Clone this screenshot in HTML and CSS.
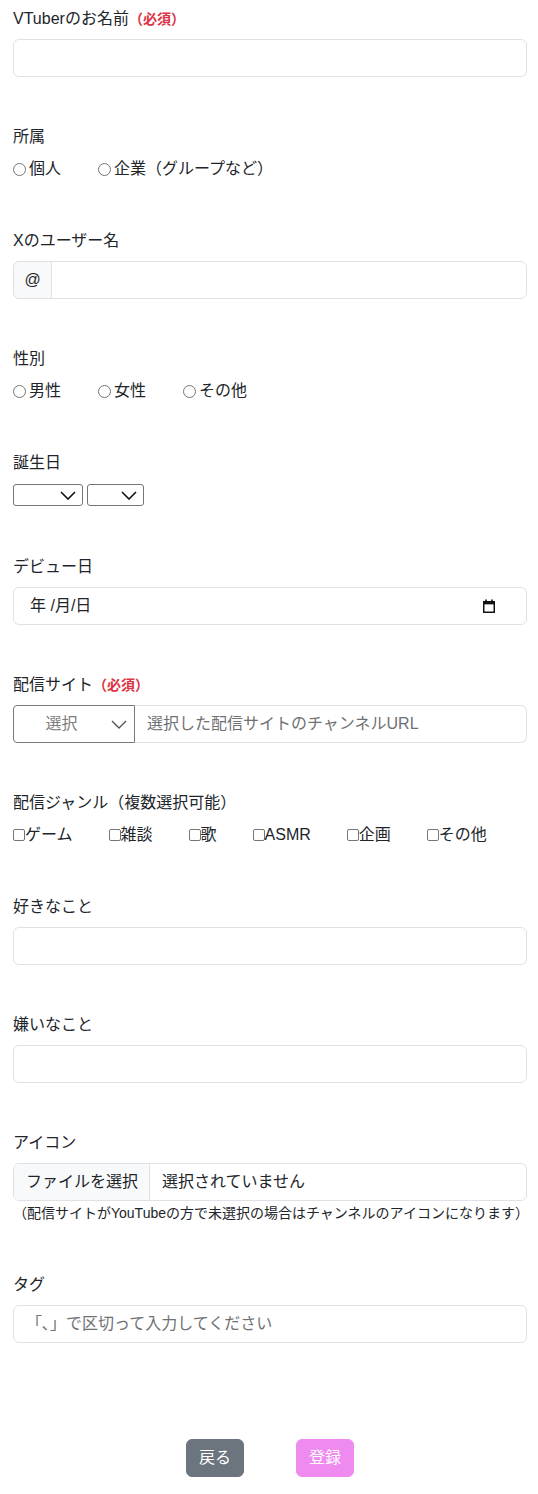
FILE: index.html
```html
<!DOCTYPE html>
<html lang="ja">
<head>
<meta charset="utf-8">
<title>VTuber登録</title>
<link rel="stylesheet" href="styles.css">
</head>
<body>
<form class="page">
  <div class="field">
    <label class="form-label">VTuberのお名前<span class="req">（必須）</span></label>
    <input class="form-control" type="text">
  </div>

  <div class="field">
    <div class="form-label">所属</div>
    <div class="choice-row">
      <label class="choice"><span class="radio"></span><span class="radio-text">個人</span></label>
      <label class="choice"><span class="radio"></span><span class="radio-text">企業（グループなど）</span></label>
    </div>
  </div>

  <div class="field">
    <label class="form-label">Xのユーザー名</label>
    <div class="input-group">
      <span class="group-text">@</span>
      <input class="form-control grow right-part" type="text">
    </div>
  </div>

  <div class="field">
    <div class="form-label">性別</div>
    <div class="choice-row">
      <label class="choice"><span class="radio"></span><span class="radio-text">男性</span></label>
      <label class="choice"><span class="radio"></span><span class="radio-text">女性</span></label>
      <label class="choice"><span class="radio"></span><span class="radio-text">その他</span></label>
    </div>
  </div>

  <div class="field">
    <div class="form-label">誕生日</div>
    <div class="date-row">
      <div class="mini-select month">
        <svg class="chev" viewBox="0 0 16 9" width="16" height="9"><path d="M1 1l7 7 7-7" fill="none" stroke="#111" stroke-width="1.6"/></svg>
      </div>
      <div class="mini-select day">
        <svg class="chev" viewBox="0 0 16 9" width="16" height="9"><path d="M1 1l7 7 7-7" fill="none" stroke="#111" stroke-width="1.6"/></svg>
      </div>
    </div>
  </div>

  <div class="field">
    <div class="form-label">デビュー日</div>
    <div class="form-control date-control">
      <span class="date-text">年 /月/日</span>
      <svg class="cal" viewBox="0 0 12 14" width="12" height="14">
        <rect x="0.75" y="2.75" width="10.5" height="10.5" fill="none" stroke="#111" stroke-width="1.5"/>
        <rect x="0.75" y="2.75" width="10.5" height="2.6" fill="#111"/>
        <rect x="2.2" y="0.5" width="1.6" height="3" fill="#111"/>
        <rect x="8.2" y="0.5" width="1.6" height="3" fill="#111"/>
      </svg>
    </div>
  </div>

  <div class="field">
    <div class="form-label">配信サイト<span class="req">（必須）</span></div>
    <div class="input-group">
      <div class="site-select">
        <span class="site-select-text">選択</span>
        <svg class="chev" viewBox="0 0 16 9" width="16" height="9"><path d="M1 1l7 7 7-7" fill="none" stroke="#555" stroke-width="1.4"/></svg>
      </div>
      <input class="form-control grow right-part no-left" type="text" placeholder="選択した配信サイトのチャンネルURL">
    </div>
  </div>

  <div class="field">
    <div class="form-label">配信ジャンル（複数選択可能）</div>
    <div class="choice-row">
      <label class="choice check-choice"><span class="check"></span>ゲーム</label>
      <label class="choice check-choice"><span class="check"></span>雑談</label>
      <label class="choice check-choice"><span class="check"></span>歌</label>
      <label class="choice check-choice"><span class="check"></span>ASMR</label>
      <label class="choice check-choice"><span class="check"></span>企画</label>
      <label class="choice check-choice"><span class="check"></span>その他</label>
    </div>
  </div>

  <div class="field">
    <label class="form-label">好きなこと</label>
    <input class="form-control" type="text">
  </div>

  <div class="field">
    <label class="form-label">嫌いなこと</label>
    <input class="form-control" type="text">
  </div>

  <div class="field">
    <div class="form-label">アイコン</div>
    <div class="file-control">
      <span class="file-button">ファイルを選択</span>
      <span class="file-name">選択されていません</span>
    </div>
    <div class="form-text">（配信サイトがYouTubeの方で未選択の場合はチャンネルのアイコンになります）</div>
  </div>

  <div class="field">
    <label class="form-label">タグ</label>
    <input class="form-control" type="text" placeholder="「､」で区切って入力してください">
  </div>

  <div class="actions">
    <button type="button" class="btn btn-back">戻る</button>
    <button type="button" class="btn btn-submit">登録</button>
  </div>
</form>
</body>
</html>
```

FILE: styles.css
```css
* {
  box-sizing: border-box;
}

html, body {
  margin: 0;
  padding: 0;
  background: #fff;
}

body {
  font-family: "Liberation Sans", "Noto Sans CJK JP", sans-serif;
  font-size: 16px;
  line-height: 24px;
  color: #212529;
}

.page {
  padding: 7px 11px 17px 13px;
  width: 538px;
}

.field {
  margin-bottom: 48px;
}

.form-label {
  display: block;
  height: 24px;
  line-height: 24px;
  margin-bottom: 8px;
  white-space: nowrap;
}

.req {
  color: #dc3545;
  font-weight: bold;
  font-size: 14px;
}

.form-control {
  display: block;
  width: 100%;
  height: 38px;
  padding: 6px 12px;
  font-family: inherit;
  font-size: 16px;
  line-height: 24px;
  color: #212529;
  background: #fff;
  border: 1px solid #dee2e6;
  border-radius: 6px;
  outline: none;
}

.form-control::placeholder {
  color: #6f7173;
}

.choice-row {
  display: flex;
  align-items: center;
  height: 24px;
}

.choice {
  display: inline-flex;
  align-items: center;
  margin-right: 37px;
  white-space: nowrap;
}

.check-choice {
  margin-right: 36px;
}

.radio {
  width: 13px;
  height: 13px;
  border: 1px solid #767676;
  border-radius: 50%;
  margin-right: 3px;
  flex: none;
}

.check {
  width: 12px;
  height: 12px;
  border: 1px solid #767676;
  border-radius: 2px;
  flex: none;
}

.input-group {
  display: flex;
  width: 100%;
  height: 38px;
}

.group-text {
  display: flex;
  align-items: center;
  justify-content: center;
  width: 39px;
  height: 38px;
  background: #f8f9fa;
  border: 1px solid #dee2e6;
  border-radius: 6px 0 0 6px;
  font-size: 16px;
  flex: none;
}

.grow {
  flex: 1;
  width: auto;
}

.right-part {
  border-radius: 0 6px 6px 0;
  margin-left: -1px;
}

.no-left {
  border-left: none;
  margin-left: 0;
}

.date-row {
  display: flex;
  align-items: center;
  height: 24px;
  gap: 4px;
}

.mini-select {
  display: flex;
  align-items: center;
  justify-content: flex-end;
  height: 22px;
  border: 1px solid #767676;
  border-radius: 3px;
  padding-right: 6px;
  background: #fff;
}

.mini-select.month {
  width: 70px;
}

.mini-select.day {
  width: 57px;
}

.chev {
  display: block;
  flex: none;
}

.date-control {
  display: flex;
  align-items: center;
  justify-content: space-between;
  padding-left: 16px;
  padding-right: 31px;
}

.date-text {
  color: #212529;
}

.cal {
  display: block;
}

.site-select {
  display: flex;
  align-items: center;
  width: 122px;
  height: 38px;
  border: 1px solid #7a7a7a;
  border-radius: 4px 0 0 4px;
  padding-right: 7px;
  flex: none;
  background: #fff;
}

.site-select-text {
  flex: 1;
  text-align: center;
  color: #7d7d7d;
  padding-right: 2px;
}

.file-control {
  display: flex;
  height: 38px;
  border: 1px solid #dee2e6;
  border-radius: 6px;
  overflow: hidden;
}

.file-button {
  display: flex;
  align-items: center;
  padding: 0 12px;
  width: 136px;
  background: #f8f9fa;
  border-right: 1px solid #dee2e6;
  color: #212529;
  white-space: nowrap;
}

.file-name {
  display: flex;
  align-items: center;
  padding-left: 12px;
  color: #212529;
}

.form-text {
  font-size: 14px;
  line-height: 24px;
  height: 24px;
  color: #212529;
  white-space: nowrap;
}

.actions {
  display: flex;
  justify-content: center;
  gap: 52px;
  padding-top: 48px;
}

.btn {
  height: 38px;
  padding: 6px 12px;
  font-family: inherit;
  font-size: 16px;
  line-height: 24px;
  color: #fff;
  border: 1px solid transparent;
  border-radius: 6px;
  cursor: pointer;
}

.btn-back {
  background: #6c757d;
  border-color: #6c757d;
}

.btn-submit {
  background: #ef8bf0;
  border-color: #ef8bf0;
}
```
